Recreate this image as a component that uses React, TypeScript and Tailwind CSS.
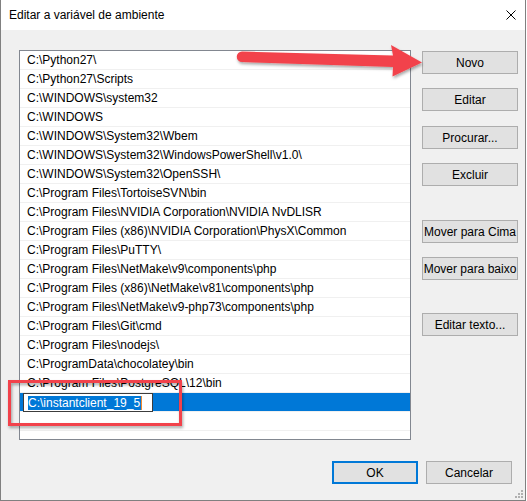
import React from "react";

const rows = [
  "C:\\Python27\\",
  "C:\\Python27\\Scripts",
  "C:\\WINDOWS\\system32",
  "C:\\WINDOWS",
  "C:\\WINDOWS\\System32\\Wbem",
  "C:\\WINDOWS\\System32\\WindowsPowerShell\\v1.0\\",
  "C:\\WINDOWS\\System32\\OpenSSH\\",
  "C:\\Program Files\\TortoiseSVN\\bin",
  "C:\\Program Files\\NVIDIA Corporation\\NVIDIA NvDLISR",
  "C:\\Program Files (x86)\\NVIDIA Corporation\\PhysX\\Common",
  "C:\\Program Files\\PuTTY\\",
  "C:\\Program Files\\NetMake\\v9\\components\\php",
  "C:\\Program Files (x86)\\NetMake\\v81\\components\\php",
  "C:\\Program Files\\NetMake\\v9-php73\\components\\php",
  "C:\\Program Files\\Git\\cmd",
  "C:\\Program Files\\nodejs\\",
  "C:\\ProgramData\\chocolatey\\bin",
  "C:\\Program Files\\PostgreSQL\\12\\bin",
];

function Btn({ label, className = "" }: { label: string; className?: string }) {
  return (
    <div
      className={
        "h-[23px] w-[96px] border border-[#adadad] bg-[#e1e1e1] flex items-center justify-center text-[12px] text-black whitespace-nowrap " +
        className
      }
    >
      {label}
    </div>
  );
}

export default function App() {
  return (
    <div
      className="relative w-[526px] h-[501px] bg-[#f0f0f0] border-x border-b border-[#808080] flex flex-col overflow-hidden"
      style={{ fontFamily: '"Liberation Sans", Arial, sans-serif' }}
    >
      {/* title bar */}
      <div className="h-[30px] bg-white flex items-center justify-between pl-[8px] pr-[9px] shrink-0">
        <span className="text-[12px] text-black">Editar a variável de ambiente</span>
        <svg width="10" height="10" viewBox="0 0 10 10" className="block">
          <path d="M0.5 0.5 L9.5 9.5 M9.5 0.5 L0.5 9.5" stroke="#000" strokeWidth="1" />
        </svg>
      </div>

      {/* body */}
      <div className="flex flex-row pt-[20px] pl-[18px]">
        <div className="w-[392px] h-[390px] border border-[#828790] bg-white text-[12px] text-black overflow-hidden">
          {rows.map((r, i) => (
            <div
              key={i}
              className="h-[19px] border-b border-[#f0f0f0] pl-[7px] pt-[1px] leading-[17px] whitespace-nowrap"
            >
              {r}
            </div>
          ))}
          <div className="h-[19px] border-b border-[#f0f0f0] bg-[#0078d7] pl-[3px] flex">
            <div className="h-[19px] w-[130px] bg-white border border-[#3c3c3c] pl-[4px] flex items-center">
              <span className="bg-[#0078d7] text-white leading-[14px] h-[14px] pr-[1px]">
                C:\instantclient_19_5
              </span>
              <span className="w-[1px] h-[14px] bg-[#f08a30]" />
            </div>
          </div>
          <div className="h-[19px] border-b border-[#f0f0f0]" />
        </div>

        <div className="ml-[11px] pt-[1px] flex flex-col">
          <Btn label="Novo" />
          <Btn label="Editar" className="mt-[14px]" />
          <Btn label="Procurar..." className="mt-[15px]" />
          <Btn label="Excluir" className="mt-[14px]" />
          <Btn label="Mover para Cima" className="mt-[34px]" />
          <Btn label="Mover para baixo" className="mt-[14px]" />
          <Btn label="Editar texto..." className="mt-[33px]" />
        </div>
      </div>

      {/* bottom buttons */}
      <div className="flex flex-row justify-end pr-[13px] mt-[21px] gap-[8px]">
        <div className="h-[23px] w-[86px] border-2 border-[#0078d7] bg-[#e1e1e1] flex items-center justify-center text-[12px] text-black">
          OK
        </div>
        <div className="h-[23px] w-[86px] border border-[#adadad] bg-[#e1e1e1] flex items-center justify-center text-[12px] text-black">
          Cancelar
        </div>
      </div>

      {/* resize grip */}
      <svg className="absolute right-[2px] bottom-[2px]" width="9" height="9" viewBox="0 0 9 9">
        <rect x="7" y="1" width="2" height="2" fill="#b0b0b0" />
        <rect x="4" y="4" width="2" height="2" fill="#b0b0b0" />
        <rect x="7" y="4" width="2" height="2" fill="#b0b0b0" />
        <rect x="1" y="7" width="2" height="2" fill="#b0b0b0" />
        <rect x="4" y="7" width="2" height="2" fill="#b0b0b0" />
        <rect x="7" y="7" width="2" height="2" fill="#b0b0b0" />
      </svg>

      {/* annotation overlay */}
      <svg className="absolute left-0 top-0 pointer-events-none" width="527" height="501" viewBox="0 0 527 501">
        <defs>
          <filter id="sh" x="-20%" y="-50%" width="140%" height="200%">
            <feDropShadow dx="1" dy="2" stdDeviation="1.5" floodColor="#000" floodOpacity="0.35" />
          </filter>
        </defs>
        <g filter="url(#sh)">
          <path
            d="M241 51.5 L392 55.5 L390 45 L421 62.5 L391.5 76.5 L392 67 L241 62 A5.25 5.25 0 0 1 241 51.5 Z"
            fill="#f2434b"
          />
          <rect x="8.5" y="381.5" width="171" height="43" fill="none" stroke="#f2434b" strokeWidth="3" />
        </g>
      </svg>
    </div>
  );
}
